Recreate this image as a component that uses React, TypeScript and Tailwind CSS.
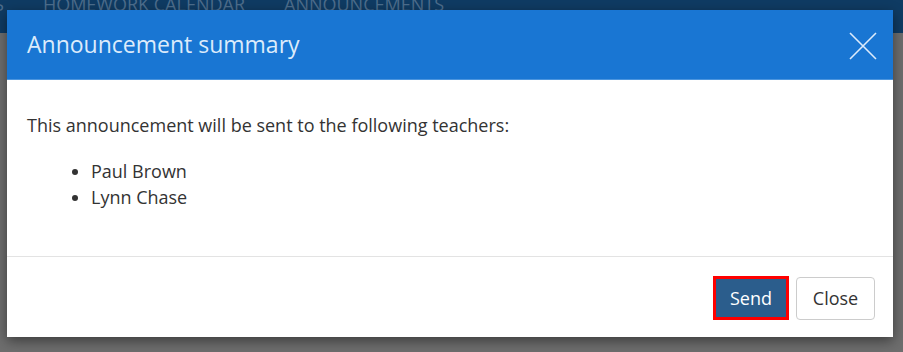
import React from "react";

export default function App() {
  return (
    <div
      className="relative h-[352px] w-[903px] overflow-hidden bg-[#6e6e6e]"
      style={{ fontFamily: '"Open Sans", "Noto Sans", sans-serif' }}
    >
      {/* Page behind the overlay */}
      <div className="flex h-[33px] items-end gap-[39px] bg-[#0f3b63] pb-[20px] text-[18px] leading-none text-[#4d6d8c]">
        <span className="-ml-[6px]">S</span>
        <span>HOMEWORK CALENDAR</span>
        <span>ANNOUNCEMENTS</span>
      </div>

      {/* Modal */}
      <div className="absolute left-[7px] top-[10px] flex h-[327px] w-[886px] flex-col bg-white shadow-[0_4px_12px_rgba(0,0,0,0.45)]">
        <div className="flex h-[70px] items-center justify-between border-b border-[#4b95de] bg-[#1976d3] pl-[20px] pr-[16px]">
          <h2 className="text-[23px] font-normal text-[#dcebfb]">Announcement summary</h2>
          <svg width="28" height="28" viewBox="0 0 28 28" className="mt-[2px]">
            <path d="M1 1 L27 27 M27 1 L1 27" stroke="#dcebfb" strokeWidth="1.6" fill="none" />
          </svg>
        </div>

        <div className="flex-1 border-b border-[#e3e3e3] px-[20px] pt-[32px] text-[18px] text-[#333]">
          <p className="leading-[26px]">This announcement will be sent to the following teachers:</p>
          <ul className="mt-[20px] list-disc pl-[64px] leading-[26px]">
            <li>Paul Brown</li>
            <li>Lynn Chase</li>
          </ul>
        </div>

        <div className="flex h-[80px] items-center justify-end gap-[7px] pr-[18px] pt-[2px]">
          <div className="border-[3px] border-[#ff0000]">
            <button className="h-[38px] w-[70px] bg-[#2b5d8c] text-[18px] text-white">Send</button>
          </div>
          <button className="h-[43px] w-[79px] rounded-[4px] border border-[#cccccc] bg-white text-[18px] text-[#333]">
            Close
          </button>
        </div>
      </div>
    </div>
  );
}
